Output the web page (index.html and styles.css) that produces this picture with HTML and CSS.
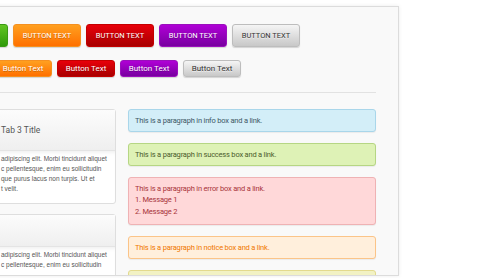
FILE: index.html
```html
<!DOCTYPE html>
<html lang="en">
<head>
    <meta charset="UTF-8">
    <title>UI Elements</title>
    <link rel="stylesheet" href="styles.css">
</head>
<body>
    <div class="panel">
        <!-- big buttons -->
        <div class="btn-row big">
            <a class="btn green">BUTTON TEXT</a>
            <a class="btn orange">BUTTON TEXT</a>
            <a class="btn red">BUTTON TEXT</a>
            <a class="btn purple">BUTTON TEXT</a>
            <a class="btn grey">BUTTON TEXT</a>
        </div>

        <!-- small buttons -->
        <div class="btn-row small">
            <a class="btn green">Button Text</a>
            <a class="btn orange">Button Text</a>
            <a class="btn red">Button Text</a>
            <a class="btn purple">Button Text</a>
            <a class="btn grey">Button Text</a>
        </div>

        <hr class="sep">

        <div class="cols">
            <div class="tabs-col">
                <div class="tab-box">
                    <div class="tab-head first">Tab 3 Title</div>
                    <p class="tab-body">
                        <span>adipiscing elit. Morbi tincidunt aliquet</span>
                        <span>c pellentesque, enim eu sollicitudin</span>
                        <span>que purus lacus non turpis. Ut et</span>
                        <span>t velit.</span>
                    </p>
                </div>
                <div class="tab-box">
                    <div class="tab-head"></div>
                    <p class="tab-body">
                        <span>adipiscing elit. Morbi tincidunt aliquet</span>
                        <span>c pellentesque, enim eu sollicitudin</span>
                    </p>
                </div>
            </div>

            <div class="msg-col">
                <div class="msg info"><p>This is a paragraph in info box and a link.</p></div>
                <div class="msg success"><p>This is a paragraph in success box and a link.</p></div>
                <div class="msg error">
                    <p>This is a paragraph in error box and a link.</p>
                    <ol>
                        <li>Message 1</li>
                        <li>Message 2</li>
                    </ol>
                </div>
                <div class="msg notice"><p>This is a paragraph in notice box and a link.</p></div>
                <div class="msg warning"><p>This is a paragraph in warning box and a link.</p></div>
            </div>
        </div>
    </div>
</body>
</html>
```

FILE: styles.css
```css
* {
    box-sizing: border-box;
    margin: 0;
    padding: 0;
}

body {
    font-family: 'Roboto', 'Liberation Sans', sans-serif;
    background-color: #fff;
    width: 501px;
    height: 278px;
    overflow: hidden;
}

.panel {
    margin: 6px 0 0 -80px;
    width: 479px;
    height: 270px;
    background: #f9f9f9;
    border: 1px solid #dcdcdc;
    box-shadow: 0 0 4px rgba(0, 0, 0, 0.08);
    overflow: hidden;
}

/* Buttons */
.btn-row {
    display: flex;
}

.btn-row.big {
    gap: 5px;
    margin: 17px 0 0 19px;
}

.btn-row.small {
    gap: 5px;
    margin: 13px 0 0 10px;
}

.btn {
    display: flex;
    align-items: center;
    justify-content: center;
    border-radius: 3px;
    border: 1px solid;
    color: #fff;
    text-shadow: 0 1px 0 rgba(0, 0, 0, 0.25);
    box-shadow: 0 1px 1px rgba(0, 0, 0, 0.15);
}

.big .btn {
    width: 68px;
    height: 23px;
    font-size: 7.5px;
}

.small .btn {
    width: 58px;
    height: 17px;
    font-size: 8px;
}

.btn.green {
    background: linear-gradient(#62c522, #2f9a0a);
    border-color: #3a9a14;
}

.btn.orange {
    background: linear-gradient(#ffa020, #ff7000);
    border-color: #f59020;
}

.btn.red {
    background: linear-gradient(#e8000a, #a80000);
    border-color: #c40000;
}

.btn.purple {
    background: linear-gradient(#b000d6, #7800a0);
    border-color: #9a10bc;
}

.btn.grey {
    background: linear-gradient(#f5f5f5, #c8c8c8);
    border-color: #bdbdbd;
    color: #333;
    text-shadow: 0 1px 0 rgba(255, 255, 255, 0.6);
}

.sep {
    border: none;
    border-top: 1px solid #e2e2e2;
    margin: 15px 0 0 0;
    width: 455px;
}

/* Columns */
.cols {
    display: flex;
    gap: 12px;
    margin: 16px 0 0 68px;
}

.tabs-col {
    width: 127px;
    display: flex;
    flex-direction: column;
    gap: 10px;
}

.tab-box {
    background: #fff;
    border: 1px solid #dedede;
    border-radius: 3px;
}

.tab-head {
    height: 32px;
    padding: 0 0 0 11px;
    background: linear-gradient(#fcfcfc, #efefef);
    border-bottom: 1px solid #e4e4e4;
    font-size: 8.5px;
    line-height: 31px;
    color: #555;
}

.tab-head.first {
    height: 41px;
    line-height: 40px;
}

.tab-body {
    padding: 3px 4px 9px 11px;
    font-family: 'Liberation Sans', sans-serif;
    font-size: 6.5px;
    line-height: 10px;
    color: #555;
    box-shadow: inset 0 4px 4px -3px rgba(0, 0, 0, 0.08);
}

.tab-body span {
    display: block;
    white-space: nowrap;
}

/* Messages */
.msg-col {
    width: 248px;
    display: flex;
    flex-direction: column;
    gap: 11px;
}

.msg {
    border: 1px solid;
    border-radius: 3px;
    padding: 6px 6px;
    font-size: 7.5px;
    line-height: 9px;
    letter-spacing: -0.2px;
    box-shadow: 0 1px 1px rgba(0, 0, 0, 0.06);
}

.msg p {
    height: 9px;
}

.msg ol {
    list-style: none;
    counter-reset: item;
    margin-top: 1px;
}

.msg li {
    counter-increment: item;
    line-height: 12px;
}

.msg li::before {
    content: counter(item) ". ";
}

.info {
    background: #d3eef8;
    border-color: #a9d6ea;
    color: #3d5866;
}

.success {
    background: #def2b6;
    border-color: #b6d684;
    color: #4b5c2c;
}

.error {
    background: #ffd8d9;
    border-color: #efb2b4;
    color: #a8343a;
}

.notice {
    background: #ffefdc;
    border-color: #fbc488;
    color: #f07800;
}

.warning {
    background: #f2f2c4;
    border-color: #e3da8e;
    color: #7a6a10;
}
```
